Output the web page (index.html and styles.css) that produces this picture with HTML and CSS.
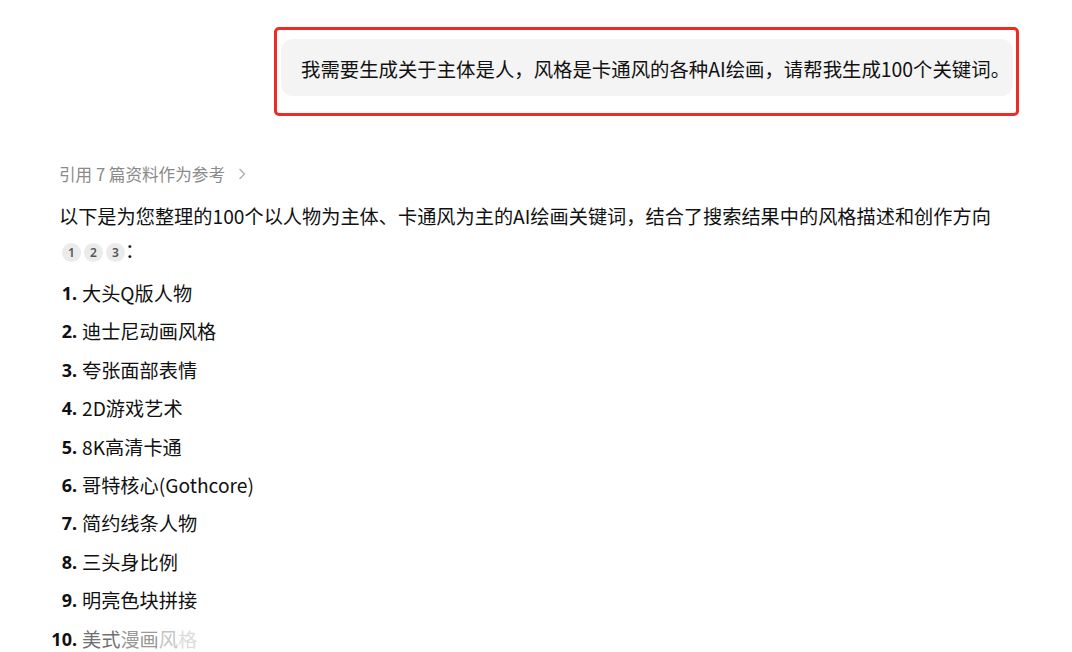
FILE: index.html
```html
<!DOCTYPE html>
<html lang="zh">
<head>
<meta charset="utf-8">
<link rel="stylesheet" href="styles.css">
</head>
<body>
<div class="page">
  <div class="user-row">
    <div class="highlight">
      <div class="bubble">我需要生成关于主体是人，风格是卡通风的各种AI绘画，请帮我生成100个关键词。</div>
    </div>
  </div>
  <div class="answer">
    <div class="refs">引用 7 篇资料作为参考
      <svg class="chev" width="10" height="14" viewBox="0 0 10 14"><path d="M2.5 2 L7.5 7 L2.5 12" fill="none" stroke="#b0b0b0" stroke-width="1.4"/></svg>
    </div>
    <p class="intro">以下是为您整理的100个以人物为主体、卡通风为主的AI绘画关键词，结合了搜索结果中的风格描述和创作方向<br><span class="cites"><span class="cite">1</span><span class="cite">2</span><span class="cite">3</span></span>：</p>
    <ol class="list">
      <li><span class="num">1.</span><span>大头Q版人物</span></li>
      <li><span class="num">2.</span><span>迪士尼动画风格</span></li>
      <li><span class="num">3.</span><span>夸张面部表情</span></li>
      <li><span class="num">4.</span><span>2D游戏艺术</span></li>
      <li><span class="num">5.</span><span>8K高清卡通</span></li>
      <li><span class="num">6.</span><span>哥特核心(Gothcore)</span></li>
      <li><span class="num">7.</span><span>简约线条人物</span></li>
      <li><span class="num">8.</span><span>三头身比例</span></li>
      <li><span class="num">9.</span><span>明亮色块拼接</span></li>
      <li><span class="num">10.</span><span><span class="f1">美式</span><span class="f2">漫画</span><span class="f3">风</span><span class="f4">格</span></span></li>
    </ol>
  </div>
</div>
</body>
</html>
```

FILE: styles.css
```css
html, body {
  margin: 0;
  padding: 0;
  background: #ffffff;
  height: 652px;
  overflow: hidden;
}
body {
  font-family: "Noto Sans CJK SC", "Noto Sans", sans-serif;
  color: #111111;
}
.page {
  display: flex;
  flex-direction: column;
}
.user-row {
  display: flex;
  justify-content: flex-end;
  padding: 27px 53px 0 0;
}
.highlight {
  border: 3px solid #ee2b24;
  border-radius: 5px;
  padding: 9px 3px 17px 4px;
}
.bubble {
  box-sizing: border-box;
  width: 732px;
  background: #f4f4f4;
  border-radius: 12px;
  height: 57px;
  line-height: 59px;
  padding: 0 0 0 20px;
  font-size: 19.4px;
  color: #111111;
  white-space: nowrap;
  overflow: hidden;
}
.answer {
  padding: 46px 0 0 59px;
}
.refs {
  display: flex;
  align-items: center;
  gap: 12px;
  font-size: 16.6px;
  line-height: 24px;
  color: #8a8a8a;
}
.intro {
  margin: 13px 0 0 0;
  font-size: 19.2px;
  line-height: 34px;
}
.cites {
  display: inline-flex;
  gap: 3px;
  margin-left: 3px;
  vertical-align: 1px;
}
.cite {
  width: 19px;
  height: 19px;
  border-radius: 50%;
  background: #ebebeb;
  color: #555;
  font-family: "Noto Sans", sans-serif;
  font-size: 12px;
  font-weight: 600;
  line-height: 19px;
  text-align: center;
}
.list {
  list-style: none;
  margin: 7px 0 0 -12px;
  padding: 0;
}
.list li {
  display: flex;
  gap: 5px;
  font-size: 19.2px;
  line-height: 38.4px;
}
.num {
  width: 30px;
  display: flex;
  justify-content: flex-end;
  font-family: "Noto Sans", sans-serif;
  font-weight: 700;
  font-size: 18px;
}
.f1 { color: #707070; }
.f2 { color: #989898; }
.f3 { color: #c4c4c4; }
.f4 { color: #dcdcdc; }
```
